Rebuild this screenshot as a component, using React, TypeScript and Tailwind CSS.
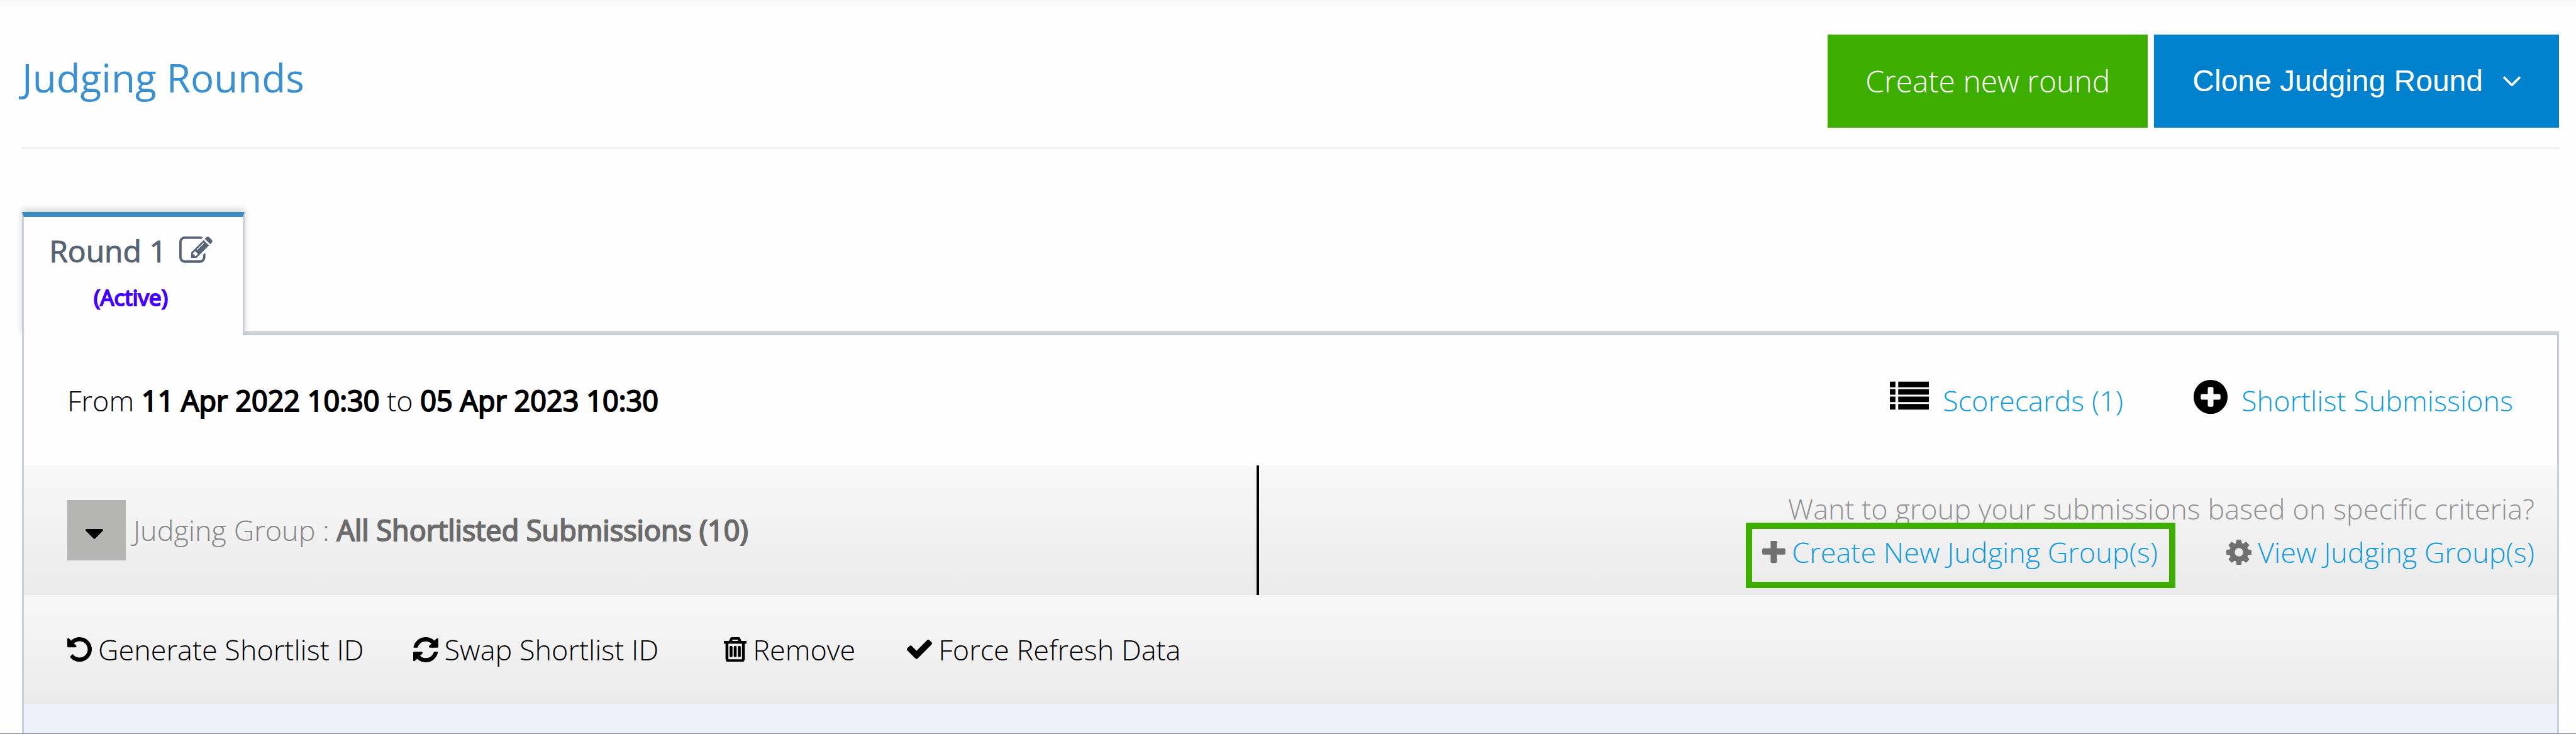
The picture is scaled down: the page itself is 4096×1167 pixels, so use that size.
import React from "react";

const paths = {
  edit: "M888 1184l116-116-152-152-116 116v56h96v96h56zm440-720q-16-16-33 1l-350 350q-17 17-1 33t33-1l350-350q17-17 1-33zm80 594v190q0 119-84.5 203.5t-203.5 84.5h-832q-119 0-203.5-84.5t-84.5-203.5v-832q0-119 84.5-203.5t203.5-84.5h832q63 0 117 25 15 7 18 23 3 17-9 29l-49 49q-14 14-32 8-23-6-45-6h-832q-66 0-113 47t-47 113v832q0 66 47 113t113 47h832q66 0 113-47t47-113v-126q0-13 9-22l64-64q15-15 35-7t20 29zm-96-738l288 288-672 672h-288v-288zm444 132l-92 92-288-288 92-92q28-28 68-28t68 28l152 152q28 28 28 68t-28 68z",
  undo: "M1664 896q0 156-61 298t-164 245-245 164-298 61q-172 0-327-72.5t-264-204.5q-7-10-6.5-22.5t8.5-20.5l137-138q10-9 25-9 16 2 23 12 73 95 179 147t225 52q104 0 198.5-40.5t163.5-109.5 109.5-163.5 40.5-198.5-40.5-198.5-109.5-163.5-163.5-109.5-198.5-40.5q-98 0-188 35.5t-160 101.5l137 138q31 30 14 69-17 40-59 40h-448q-26 0-45-19t-19-45v-448q0-42 40-59 39-17 69 14l130 129q107-101 244.5-156.5t284.5-55.5q156 0 298 61t245 164 164 245 61 298z",
  refresh: "M1639 1056q0 5-1 7-64 268-268 434.5t-478 166.5q-146 0-282.5-55t-243.5-157l-129 129q-19 19-45 19t-45-19-19-45v-448q0-26 19-45t45-19h448q26 0 45 19t19 45-19 45l-137 137q71 66 161 102t187 36q134 0 250-65t186-179q11-17 53-117 8-23 30-23h192q13 0 22.5 9.5t9.5 22.5zm25-800v448q0 26-19 45t-45 19h-448q-26 0-45-19t-19-45 19-45l138-138q-148-137-349-137-134 0-250 65t-186 179q-11 17-53 117-8 23-30 23h-199q-13 0-22.5-9.5t-9.5-22.5v-7q65-268 270-434.5t480-166.5q146 0 284 55.5t245 156.5l130-129q19-19 45-19t45 19 19 45z",
  trash: "M704 736v576q0 14-9 23t-23 9h-64q-14 0-23-9t-9-23v-576q0-14 9-23t23-9h64q14 0 23 9t9 23zm256 0v576q0 14-9 23t-23 9h-64q-14 0-23-9t-9-23v-576q0-14 9-23t23-9h64q14 0 23 9t9 23zm256 0v576q0 14-9 23t-23 9h-64q-14 0-23-9t-9-23v-576q0-14 9-23t23-9h64q14 0 23 9t9 23zm128 724v-948h-896v948q0 22 7 40.5t14.5 27 10.5 8.500h832q3 0 10.500-8.500t14.500-27 7-40.500zm-672-1076h448l-48-117q-7-9-17-11h-317q-10 2-17 11zm928 32v64q0 14-9 23t-23 9h-96v948q0 83-47 143.500t-113 60.500h-832q-66 0-113-58.500t-47-141.500v-952h-96q-14 0-23-9t-9-23v-64q0-14 9-23t23-9h309l70-167q15-37 54-63t79-26h320q40 0 79 26t54 63l70 167h309q14 0 23 9t9 23z",
  check: "M1671 566q0 40-28 68l-724 724-136 136q-28 28-68 28t-68-28l-136-136-362-362q-28-28-28-68t28-68l136-136q28-28 68-28t68 28l294 295 656-657q28-28 68-28t68 28l136 136q28 28 28 68z",
  plusCircle: "M1344 960v-128q0-26-19-45t-45-19h-256v-256q0-26-19-45t-45-19h-128q-26 0-45 19t-19 45v256h-256q-26 0-45 19t-19 45v128q0 26 19 45t45 19h256v256q0 26 19 45t45 19h128q26 0 45-19t19-45v-256h256q26 0 45-19t19-45zm320-64q0 209-103 385.500t-279.500 279.500-385.500 103-385.500-103-279.500-279.500-103-385.500 103-385.500 279.500-279.500 385.500-103 385.500 103 279.500 279.500 103 385.500z",
  plus: "M1600 736v192q0 40-28 68t-68 28h-416v416q0 40-28 68t-68 28h-192q-40 0-68-28t-28-68v-416h-416q-40 0-68-28t-28-68v-192q0-40 28-68t68-28h416v-416q0-40 28-68t68-28h192q40 0 68 28t28 68v416h416q40 0 68 28t28 68z",
  cog: "M1152 896q0-106-75-181t-181-75-181 75-75 181 75 181 181 75 181-75 75-181zm512-109v222q0 12-8 23t-20 13l-185 28q-19 54-39 91 35 50 107 138 10 12 10 25t-9 23q-27 37-99 108t-94 71q-12 0-26-9l-138-108q-44 23-91 38-16 136-29 186-7 28-36 28h-222q-14 0-24.500-8.500t-11.500-21.500l-28-184q-49-16-90-37l-141 107q-10 9-25 9-14 0-25-11-126-114-165-168-7-10-7-23 0-12 8-23 15-21 51-66.500t54-70.500q-27-50-41-99l-183-27q-13-2-21-12.500t-8-23.500v-222q0-12 8-23t19-13l186-28q14-46 39-92-40-57-107-138-10-12-10-24 0-10 9-23 26-36 98.500-107.500t94.500-71.500q13 0 26 10l138 107q44-23 91-38 16-136 29-186 7-28 36-28h222q14 0 24.500 8.500t11.500 21.500l28 184q49 16 90 37l142-107q9-9 24-9 13 0 25 10 129 119 165 170 7 8 7 22 0 12-8 23-15 21-51 66.500t-54 70.500q26 50 41 98l183 28q13 2 21 12.500t8 23.500z",
  angle: "M1395 736q0 13-10 23l-466 466q-10 10-23 10t-23-10l-466-466q-10-10-10-23t10-23l50-50q10-10 23-10t23 10l393 393 393-393q10-10 23-10t23 10l50 50q10 10 10 23z",
  caret: "M1408 704q0 26-19 45l-448 448q-19 19-45 19t-45-19l-448-448q-19-19-19-45t19-45 45-19h896q26 0 45 19t19 45z",
  list: "M0 256h256v256H0zM384 256h1408v256H384zM0 597h256v256H0zM384 597h1408v256H384zM0 939h256v256H0zM384 939h1408v256H384zM0 1280h256v256H0zM384 1280h1408v256H384z",
};

function Icon({ name, box = "0 0 1792 1792", className }: { name: keyof typeof paths; box?: string; className: string }) {
  return (
    <svg viewBox={box} fill="currentColor" aria-hidden="true" className={className}>
      <path d={paths[name]} />
    </svg>
  );
}

function Strong({ children }: { children: React.ReactNode }) {
  return <b className="font-normal [-webkit-text-stroke:2px_currentColor]">{children}</b>;
}

const tight = "128 128 1536 1536";

export default function App() {
  return (
    <div className="flex min-h-screen flex-col bg-[#fefefe] font-['Open_Sans',sans-serif] text-[45px] leading-[64px] font-light text-black">
      <div className="h-3 bg-linear-to-b from-[#f7f7f7] to-[#fefefe]" />
      <div className="flex grow flex-col pr-[27px] pl-[35px]">
        <header className="flex items-start justify-between border-b-3 border-[#eeeeee] pt-[43px] pb-[31px]">
          <h1 className="pt-[26px] text-[62px] leading-[84px] font-normal text-[#3a8fd0]">Judging Rounds</h1>
          <div className="flex gap-[10px] text-[48px] text-white [text-shadow:0_-3px_0_rgba(0,0,0,0.25)]">
            <button type="button" className="h-[148px] bg-[#3dae00] px-[60px]">Create new round</button>
            <button type="button" className="flex h-[148px] items-center gap-8 bg-[#0081cd] px-[61px] font-['Liberation_Sans',sans-serif] font-normal">
              Clone Judging Round
              <Icon name="angle" box="396 640 1000 600" className="w-7" />
            </button>
          </div>
        </header>

        <nav className="mt-[100px] flex">
          <a href="#round-1" className="relative z-10 -mb-[3px] flex h-[196px] w-[354px] flex-col items-center border-x-3 border-t-8 border-x-[#c5d0dc] border-t-[#3b8dc4] bg-[#fefefe] pt-[22px] pr-2 shadow-[0_-4px_10px_rgba(0,0,0,0.18)] [clip-path:inset(-20px_-20px_0_-20px)]">
            <span className="flex items-center gap-5 text-[48px] font-normal text-[#576373] [-webkit-text-stroke:1px_currentColor]">
              Round 1
              <Icon name="edit" box="0 128 1792 1536" className="w-[53px]" />
            </span>
            <span className="mt-[10px] text-[35px] leading-[64px] font-normal text-[#4400ff] [-webkit-text-stroke:2px_currentColor]">(Active)</span>
          </a>
          <div className="grow border-b-4 border-[#d5d5d5]" />
        </nav>

        <main id="round-1" className="flex grow flex-col border-x-3 border-t-3 border-[#c5d0dc]">
          <section className="flex h-[207px] items-center justify-between pr-[70px] pl-[69px]">
            <p>
              From <Strong>11 Apr 2022 10:30</Strong> to <Strong>05 Apr 2023 10:30</Strong>
            </p>
            <div className="flex gap-[112px] text-[#129bdb]">
              <a href="#scorecards" className="flex items-center gap-[22px]">
                <Icon name="list" box="0 256 1792 1280" className="mb-4 h-[52px] w-[62px] text-black" />
                Scorecards (1)
              </a>
              <a href="#shortlist" className="flex items-center gap-[22px]">
                <Icon name="plusCircle" box={tight} className="mb-3 w-[54px] text-black" />
                Shortlist Submissions
              </a>
            </div>
          </section>

          <section className="flex h-[206px] bg-linear-to-b from-[#f8f8f8] to-[#eaeaea]">
            <div className="flex w-[48.75%] items-center gap-3 border-r-4 border-black pl-[69px] text-[#858585]">
              <button type="button" aria-label="Judging group menu" className="flex h-24 w-[93px] items-center justify-center bg-[#b5b5b3] text-black">
                <Icon name="caret" box="384 640 1024 576" className="mt-3 mr-2 w-7" />
              </button>
              <p>
                Judging Group : <span className="text-[#6a6a6a]"><Strong>All Shortlisted Submissions (10)</Strong></span>
              </p>
            </div>
            <div className="flex grow flex-col items-end pt-[37px] pr-9 text-[#929292]">
              <p>Want to group your submissions based on specific criteria?</p>
              <div className="mt-[5px] flex gap-[109px]">
                <a href="#create-group" className="relative flex items-center gap-[10px] text-[#129bdb] before:absolute before:-top-[15px] before:-right-[28px] before:-bottom-[25px] before:-left-[26px] before:border-10 before:border-[#3dae00]">
                  <Icon name="plus" box="192 192 1408 1408" className="w-[37px] text-[#707070]" />
                  Create New Judging Group(s)
                </a>
                <a href="#view-groups" className="flex items-center gap-[10px] text-[#129bdb]">
                  <Icon name="cog" box={tight} className="w-10 text-[#707070]" />
                  View Judging Group(s)
                </a>
              </div>
            </div>
          </section>

          <section className="flex h-[173px] items-center bg-linear-to-b from-[#f8f8f8] to-[#eaeaea] pl-[69px]">
            <button type="button" className="mr-[78px] flex items-center gap-[10px]">
              <Icon name="undo" box={tight} className="w-[39px]" />
              Generate Shortlist ID
            </button>
            <button type="button" className="mr-[104px] flex items-center gap-[10px]">
              <Icon name="refresh" box={tight} className="w-10" />
              Swap Shortlist ID
            </button>
            <button type="button" className="mr-[82px] flex items-center gap-[10px]">
              <Icon name="trash" box="192 128 1408 1536" className="w-9 stroke-current stroke-[50]" />
              Remove
            </button>
            <button type="button" className="flex items-center gap-[10px]">
              <Icon name="check" box="121 334 1550 1188" className="w-10" />
              Force Refresh Data
            </button>
          </section>

          <div className="grow bg-[#ecf1fa]" />
        </main>
      </div>
      <div className="h-px bg-[#77808a]" />
    </div>
  );
}
